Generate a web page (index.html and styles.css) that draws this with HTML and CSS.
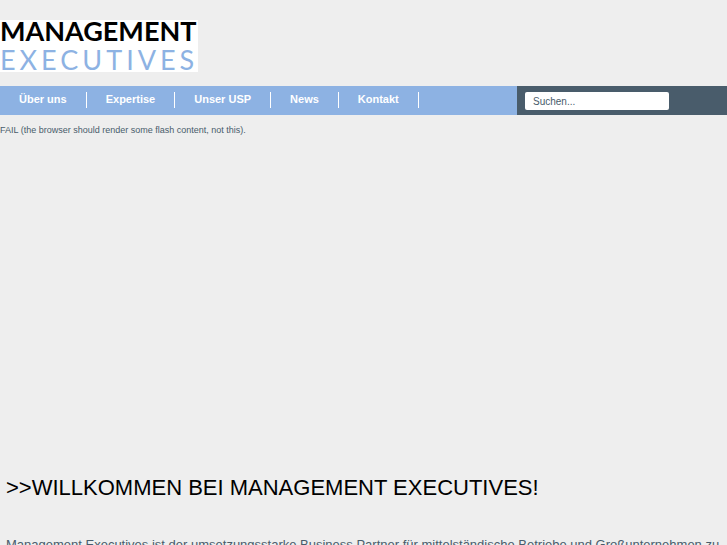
FILE: index.html
```html
<!DOCTYPE html>
<html lang="de">
<head>
    <meta charset="UTF-8">
    <meta name="viewport" content="width=device-width, initial-scale=1.0">
    <title>Management Executives</title>
    <link rel="stylesheet" href="styles.css">
</head>
<body>
    <header class="header">
        <a href="#" class="logo">
            <span class="logo-top">MANAGEMENT</span>
            <span class="logo-bottom">EXECUTIVES</span>
        </a>
    </header>

    <div class="navbar">
        <nav class="menu">
            <a href="#" class="menu-link">Über uns</a>
            <a href="#" class="menu-link">Expertise</a>
            <a href="#" class="menu-link">Unser USP</a>
            <a href="#" class="menu-link">News</a>
            <a href="#" class="menu-link">Kontakt</a>
        </nav>
        <form class="search">
            <input type="text" class="search-field" aria-label="Suchen" placeholder="Suchen...">
        </form>
    </div>

    <div class="flash">FAIL (the browser should render some flash content, not this).</div>

    <main class="content">
        <h1>&gt;&gt;WILLKOMMEN BEI MANAGEMENT EXECUTIVES!</h1>
        <p>Management Executives ist der umsetzungsstarke Business Partner für mittelständische Betriebe und Großunternehmen zu</p>
    </main>
</body>
</html>
```
FILE: styles.css
```css
body {
    margin: 0;
    background-color: #eee;
    color: #495c6b;
    font-family: "Liberation Sans", Arial, sans-serif;
}

.header {
    padding: 20px 0 14px;
}

/* Logo */
.logo {
    display: inline-flex;
    flex-direction: column;
    gap: 6px;
    background-color: #fff;
    font-family: Lato, sans-serif;
    font-size: 27px;
    text-decoration: none;
    vertical-align: top;
}

.logo-top {
    color: #000;
    font-weight: bold;
    line-height: 22px;
}

.logo-bottom {
    color: #8db2e3;
    letter-spacing: 4px;
    line-height: 24px;
}

/* Navigation */
.navbar {
    display: flex;
    height: 29px;
    background-color: #8db2e3;
}

.menu {
    display: flex;
    flex: 1;
    align-items: flex-start;
    padding-top: 6px;
}

.menu-link {
    padding: 0 19px 2px;
    border-right: 1px solid #fff;
    color: #fff;
    font-size: 11px;
    font-weight: bold;
    line-height: 14px;
    text-decoration: none;
}

.search {
    box-sizing: border-box;
    width: 210px;
    padding: 6px 8px;
    background-color: #495c6b;
}

.search-field {
    display: block;
    box-sizing: border-box;
    width: 144px;
    height: 18px;
    padding: 0 8px;
    border: none;
    border-radius: 2px;
    background-color: #fff;
    color: #495c6b;
    font-family: inherit;
    font-size: 10px;
}

.search-field::placeholder {
    color: #495c6b;
    opacity: 1;
}

.flash {
    height: 350px;
    padding-top: 9px;
    font-size: 9px;
    line-height: 12px;
}

.content {
    padding: 0 6px;
}

h1 {
    margin: 0 0 34px;
    color: #000;
    font-size: 22px;
    font-weight: normal;
    line-height: 28px;
}

p {
    margin: 0;
    font-size: 13px;
    line-height: 18px;
}
```
